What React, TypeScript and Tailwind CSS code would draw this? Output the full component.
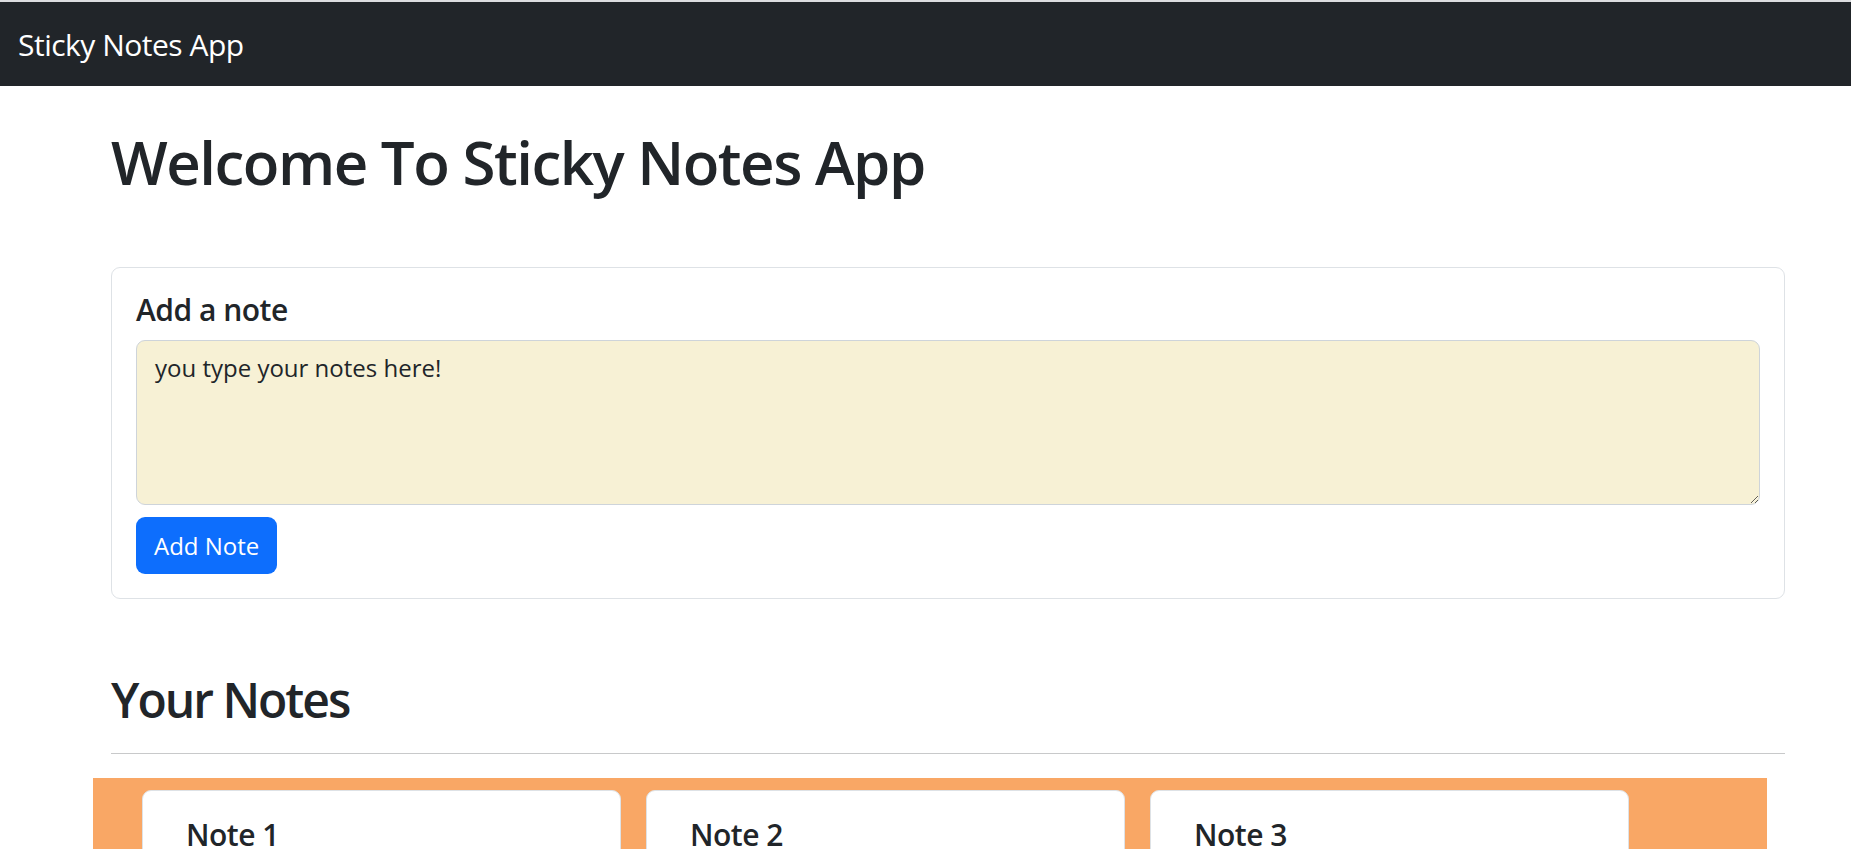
const notes = ["Note 1", "Note 2", "Note 3"];

function NoteCard({ title }: { title: string }) {
  return (
    <div className="w-[479px] h-[220px] shrink-0 bg-white border border-[#dee2e6] rounded-[9px] px-[43px] pt-[26px]">
      <h5 className="text-[30px] leading-[36px] font-semibold tracking-[-0.5px] text-[#212529]">{title}</h5>
    </div>
  );
}

export default function App() {
  return (
    <div className="min-h-screen bg-white font-['Open_Sans',sans-serif] text-[#212529] overflow-hidden">
      <div className="h-[2px] bg-[#dcdde0]" />
      <nav className="h-[84px] bg-[#212529] flex items-center px-[18px]">
        <span className="text-white text-[30px] leading-[45px] tracking-[-0.5px]">Sticky Notes App</span>
      </nav>

      <main className="ml-[111px] w-[1674px]">
        <h1 className="mt-[40px] text-[60px] leading-[72px] font-semibold tracking-[-1.5px]">Welcome To Sticky Notes App</h1>

        <div className="mt-[69px] border border-[#dee2e6] rounded-[9px] p-[24px]">
          <h5 className="text-[30px] leading-[36px] font-semibold tracking-[-0.5px] mb-[12px]">Add a note</h5>
          <textarea
            className="block w-full h-[165px] bg-[#f7f1d5] border border-[#ced4da] rounded-[9px] px-[18px] py-[9px] text-[24px] leading-[36px] text-[#212529] outline-none"
            defaultValue="you type your notes here!"
          />
          <button className="mt-[12px] h-[57px] px-[18px] bg-[#0d6efd] text-white text-[24px] leading-[36px] rounded-[9px]">
            Add Note
          </button>
        </div>

        <h2 className="mt-[72px] text-[48px] leading-[58px] font-semibold tracking-[-2px]">Your Notes</h2>
        <hr className="mt-[24px] border-t border-[#c8c9ca]" />

        <div className="mt-[24px] -ml-[18px] w-[1674px] bg-[#f9a765] pl-[49px] pt-[12px] flex gap-[25px]">
          {notes.map((n) => (
            <NoteCard key={n} title={n} />
          ))}
        </div>
      </main>
    </div>
  );
}
